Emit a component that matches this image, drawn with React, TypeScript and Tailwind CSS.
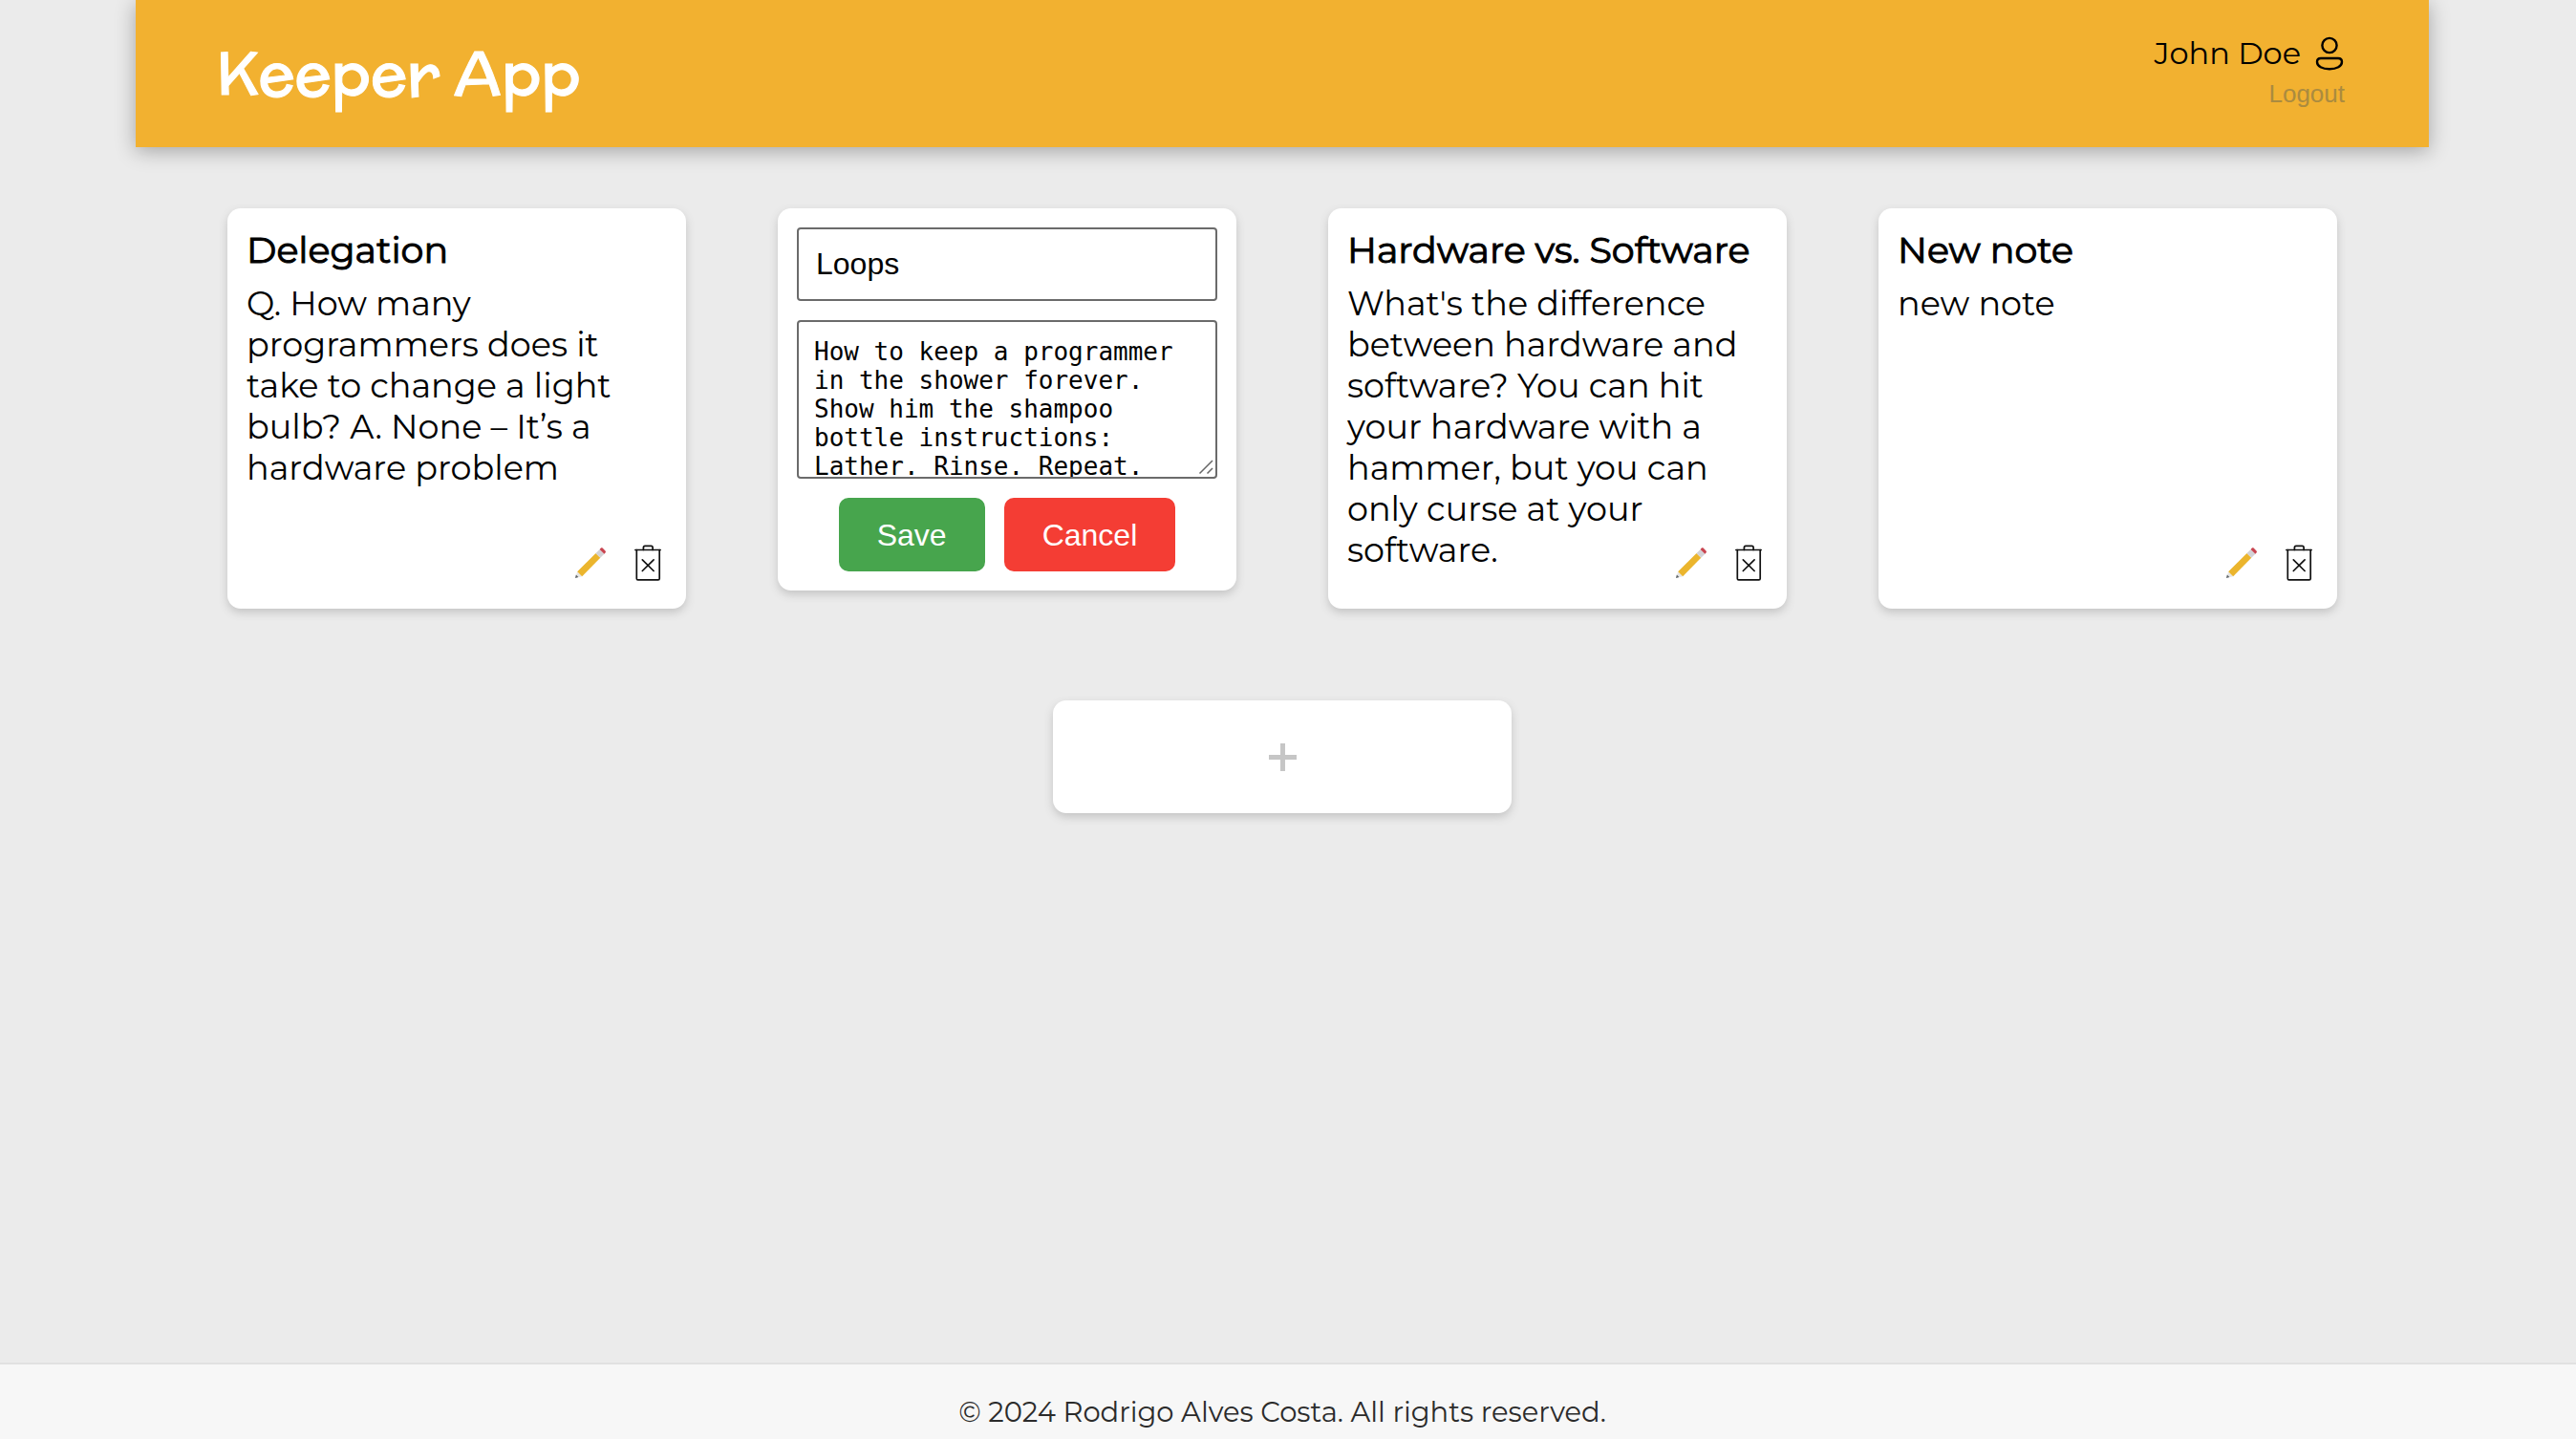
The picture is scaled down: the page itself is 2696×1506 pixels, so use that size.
import React, { useState } from "react";

const sans = "font-['Montserrat','Inter',sans-serif]";

function UserIcon() {
  return (
    <svg className="h-9 w-8" viewBox="0 0 32 36" fill="none" stroke="currentColor" strokeWidth="2.4" aria-hidden="true">
      <circle cx="16" cy="9.5" r="7.6" />
      <path d="M7 23h18c2.400 0 4 1.500 4 3.700C29 31.500 23.500 34.300 16 34.300S3 31.500 3 26.700C3 24.500 4.600 23 7 23Z" />
    </svg>
  );
}

function PencilIcon() {
  return (
    <svg className="h-8 w-8" viewBox="0 0 32 32" aria-hidden="true">
      <path d="M2.200 25.300 7.200 30.300 0 32Z" fill="#e6e6e4" />
      <path d="M.9 28.600 3.400 31.100 0 32Z" fill="#5f6468" />
      <path d="M2.200 25.300 21.500 6 26.300 10.800 7.200 30.300Z" fill="#ebb52d" />
      <path d="M21.500 6 25.600 1.900 30.400 6.700 26.300 10.800Z" fill="#d2d2d6" />
      <path d="M25.600 1.900 26.900.600C27.500 0 28 0 28.600.600L31.500 3.500C32.100 4.100 32.100 4.800 31.500 5.400L30.400 6.700Z" fill="#c8434f" />
    </svg>
  );
}

function TrashIcon() {
  return (
    <svg className="h-[38px] w-7" viewBox="0 0 28 38" fill="none" stroke="#111" strokeWidth="1.700" strokeLinecap="round" strokeLinejoin="round" aria-hidden="true">
      <path d="M.9 5.500H27.100" />
      <path d="M9.400 5.500V3C9.400 1.900 10 1.300 11 1.300H17.500C18.500 1.300 19.100 1.900 19.100 3V5.500" />
      <path d="M2.300 5.500V35.500C2.300 36.400 2.800 36.900 3.700 36.900H24.800C25.700 36.900 26.200 36.400 26.200 35.500V5.500" />
      <path d="M8.300 15.900 20.100 27.500M20.100 15.900 8.300 27.500" />
    </svg>
  );
}

const cardClass = "rounded-[14px] bg-white shadow-[0_4px_10px_#c4c4c4]";

function Note({ title, content }: { title: string; content: string }) {
  return (
    <article className={`${cardClass} relative min-h-[419px] p-5`}>
      <h2 className="text-[38px] leading-[48px] font-normal whitespace-nowrap [-webkit-text-stroke:1px_black]">{title}</h2>
      <p className="mt-2.5 text-[35px] leading-[43px]">{content}</p>
      <div className="absolute right-[26px] bottom-[29px] flex items-center gap-[30px]">
        <button type="button" aria-label={`Edit ${title}`}>
          <PencilIcon />
        </button>
        <button type="button" aria-label={`Delete ${title}`}>
          <TrashIcon />
        </button>
      </div>
    </article>
  );
}

function NoteEditor() {
  const [title, setTitle] = useState("Loops");
  const [content, setContent] = useState(
    "How to keep a programmer in the shower forever. Show him the shampoo bottle instructions: Lather. Rinse. Repeat."
  );
  const field = "block w-full rounded-[4px] border-2 border-[#6b6b6b] bg-white";
  return (
    <form
      className={`${cardClass} flex flex-col gap-5 self-start p-5 font-['Liberation_Sans',Arial,sans-serif]`}
      onSubmit={(e) => e.preventDefault()}
    >
      <input
        aria-label="Title"
        className={`${field} h-[77px] px-[18px] text-[32px]`}
        value={title}
        onChange={(e) => setTitle(e.target.value)}
      />
      <div className="relative">
        <textarea
          aria-label="Content"
          className={`${field} h-[166px] resize-none overflow-hidden px-4 py-4 font-['DejaVu_Sans_Mono',monospace] text-[26px] leading-[30px]`}
          value={content}
          onChange={(e) => setContent(e.target.value)}
        />
        <svg className="pointer-events-none absolute right-1 bottom-1 h-4 w-4" viewBox="0 0 16 16" stroke="#666" strokeWidth="1.500" aria-hidden="true">
          <path d="M1.500 14.500 15 1M9.500 14.500 15 9" />
        </svg>
      </div>
      <div className="flex justify-center gap-5 text-[32px] text-white">
        <button type="submit" className="h-[77px] rounded-[10px] bg-[#47a54d] px-10">
          Save
        </button>
        <button type="button" className="h-[77px] rounded-[10px] bg-[#f43d34] px-10">
          Cancel
        </button>
      </div>
    </form>
  );
}

export default function App() {
  return (
    <div className={`${sans} flex min-h-screen flex-col bg-[#ebebeb] text-black`}>
      <div className="grow pr-3">
        <div className="mx-auto w-full max-w-[2400px]">
          <header className="flex h-[154px] items-start justify-between bg-[#f2b130] pr-[88px] pl-[84px] shadow-[0_4px_20px_rgba(0,0,0,0.3)]">
            <h1 className="pt-9 font-['McLaren','Inter',sans-serif] text-[64px] leading-[80px] font-normal text-white [-webkit-text-stroke:1px_white]">
              Keeper App
            </h1>
            <div className="flex flex-col items-end pt-9">
              <div className="flex items-center gap-[14px] text-[32px] leading-[40px]">
                <span>John Doe</span>
                <UserIcon />
              </div>
              <button type="button" className="mt-1 font-['Liberation_Sans',Arial,sans-serif] text-[26px] leading-[36px] text-[#ab8b3f]">
                Logout
              </button>
            </div>
          </header>
          <main className="px-24 pt-16">
            <section className="grid grid-cols-4 gap-24">
              <Note
                title="Delegation"
                content="Q. How many programmers does it take to change a light bulb? A. None – It’s a hardware problem"
              />
              <NoteEditor />
              <Note
                title="Hardware vs. Software"
                content="What's the difference between hardware and software? You can hit your hardware with a hammer, but you can only curse at your software."
              />
              <Note title="New note" content="new note" />
            </section>
            <button
              type="button"
              aria-label="Add note"
              className={`${cardClass} mx-auto mt-24 mb-12 flex h-[118px] w-full max-w-[480px] items-center justify-center`}
            >
              <svg className="h-[29px] w-[29px]" viewBox="0 0 29 29" stroke="#c6c6c6" strokeWidth="5" aria-hidden="true">
                <path d="M0 14.500H29M14.500 0V29" />
              </svg>
            </button>
          </main>
        </div>
      </div>
      <footer className="h-20 border-t-2 border-[#e1e1e1] bg-[#f7f7f7] pt-8 pr-3 text-center text-[29px] leading-[36px] text-[#2b2b2b]">
        © 2024 Rodrigo Alves Costa. All rights reserved.
      </footer>
    </div>
  );
}
